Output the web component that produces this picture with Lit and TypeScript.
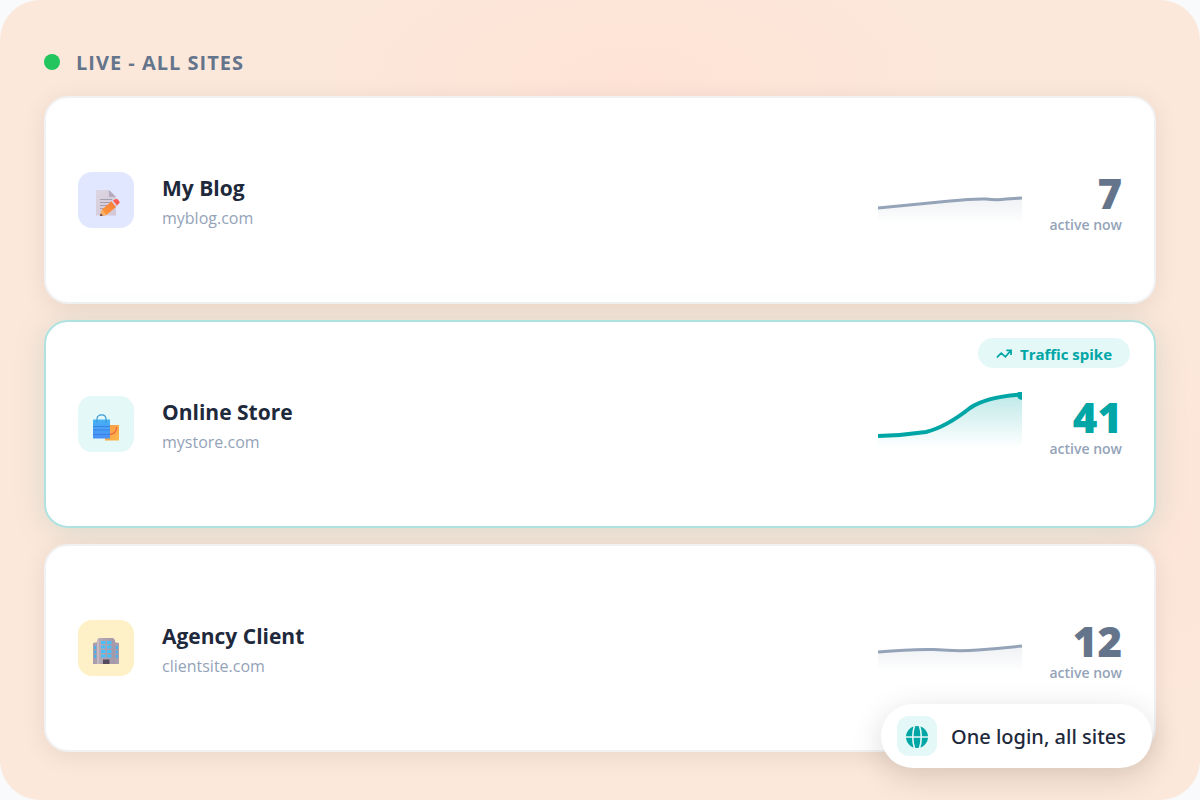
import { LitElement, html, css, svg, nothing } from "lit";
import { customElement, property } from "lit/decorators.js";

const noteIcon = svg`
  <defs>
    <linearGradient id="paper" x1="0" y1="0" x2="1" y2="1"><stop offset="0" stop-color="#dcd6e2"/><stop offset="1" stop-color="#d3c5d6"/></linearGradient>
    <linearGradient id="pencil" x1="1" y1="0" x2="0" y2="1"><stop offset="0" stop-color="#f77a38"/><stop offset="1" stop-color="#ff9c38"/></linearGradient>
  </defs>
  <path d="M4 1h13l7 7v18.500H4z" fill="url(#paper)"/>
  <path d="M17 1l7 7h-5.500q-1.500 0-1.500-1.500z" fill="#b5a9bd"/>
  <path d="M8 10.500h12M8 13.500h12M8 16.500h10M8 19.500h6" stroke="#a3a0b3" stroke-width="1"/>
  <path d="M8 27l2-6.500L20 12l4.500 5.500L14.500 26z" fill="url(#pencil)"/>
  <path d="M8 27l2-6.500 4.500 5.500z" fill="#f5b069"/>
  <path d="M8 27l.8-2.500 2 2z" fill="#50383d"/>
  <path d="M19.500 12.500l1.500-1.200 4.500 5.500-1.500 1.200z" fill="#d9d3e5"/>
  <path d="M21 11.500l3-1.600q1-.5 1.800.5l1.600 2q.7 1-.2 1.900L25 16.500z" fill="#fb5b4c"/>`;

const bagsIcon = svg`
  <defs>
    <linearGradient id="blue" x1="0" y1="0" x2="0" y2="1"><stop offset="0" stop-color="#46b2f5"/><stop offset="1" stop-color="#4b8ff5"/></linearGradient>
    <linearGradient id="amber" x1="0" y1="0" x2="1" y2="1"><stop offset="0" stop-color="#f59a45"/><stop offset="1" stop-color="#ffb84a"/></linearGradient>
  </defs>
  <path d="M13 12h14v15.500H13z" fill="url(#amber)"/>
  <path d="M24.500 14c0 5-2 7-6.500 7.300" fill="none" stroke="#ee6540" stroke-width="1.300"/>
  <path d="M1 6.500h17v19H1z" fill="url(#blue)"/>
  <path d="M1 13.500h17M1 17h17M1 21.500h17" stroke="#3a82e6" stroke-width="1.200"/>
  <path d="M5 10V6c0-5.500 9-5.500 9 0v4" fill="none" stroke="#3a9bd9" stroke-width="1.200"/>`;

const officeIcon = svg`
  <defs>
    <linearGradient id="wall" x1="0" y1="0" x2="1" y2="0"><stop offset="0" stop-color="#b7abb8"/><stop offset="1" stop-color="#a397a8"/></linearGradient>
  </defs>
  <path d="M1 6l5-1v22H1zM22 5l5 1v21h-5z" fill="#a99eae"/>
  <path d="M5 3l2-2h14l2 2v24H5z" fill="url(#wall)"/>
  <path d="M5 3l2-2v26H5z" fill="#c5bac4"/>
  <path d="M2.200 9h2v3h-2zM2.200 13.500h2v3h-2zM2.200 18h2v3h-2zM23.800 9h2v3h-2zM23.800 13.500h2v3h-2zM23.800 18h2v3h-2z" fill="#3db2f0"/>
  <path d="M9 4h4.500v3H9zM15 4h4.500v3H15zM9 8.500h4.500v3H9zM15 8.500h4.500v3H15zM9 13h4.500v3H9zM15 13h4.500v3H15zM9 17.500h4.500v3H9zM15 17.500h4.500v3H15z" fill="#49bff8"/>
  <path d="M11 22.500h6.500V27H11z" fill="#554a5e"/>`;

interface Site {
  name: string;
  domain: string;
  active: number;
  tone: string;
  icon: unknown;
  line: string;
  spike?: boolean;
}

const sites: Site[] = [
  { name: "My Blog", domain: "myblog.com", active: 7, tone: "indigo", icon: noteIcon,
    line: "M0 40L72 33Q96 30.500 108 31Q120 32.500 128 31L144 30" },
  { name: "Online Store", domain: "mystore.com", active: 41, tone: "teal", icon: bagsIcon, spike: true,
    line: "M0 44Q24 43.500 48 40Q68 35 92 16Q108 5 144 2.500" },
  { name: "Agency Client", domain: "clientsite.com", active: 12, tone: "amber", icon: officeIcon,
    line: "M0 36Q32 33 56 33.500Q80 35.500 100 34Q120 32.500 144 30" },
];

@customElement("site-card")
class SiteCard extends LitElement {
  @property({ attribute: false }) site!: Site;

  static styles = css`
    :host { display: flex; flex: 1; }
    .card {
      position: relative;
      box-sizing: border-box;
      flex: 1;
      display: flex;
      align-items: center;
      gap: 28px;
      padding: 16px 32px;
      background: #fff;
      border: 2px solid #f1f1f3;
      border-radius: 24px;
      box-shadow: 0 4px 24px rgba(0, 0, 0, 0.08);
    }
    .card.spike { border-color: #aee3e2; box-shadow: 0 4px 32px rgba(0, 130, 130, 0.15); }
    .tile { flex: none; width: 56px; height: 56px; border-radius: 14px; display: grid; place-items: center; }
    .tile svg { width: 28px; height: 28px; display: block; margin-top: 6px; }
    .indigo { background: #e0e7ff; }
    .teal { background: #e3f8f7; }
    .amber { background: #fef1c7; }
    .about { flex: 1; min-width: 0; padding-top: 8px; }
    .name { margin: 0; font-size: 21px; line-height: 28px; font-weight: 700; color: #1e293b; }
    .domain { font-size: 16px; line-height: 32px; color: #94a3b8; display: block; }
    .spark { flex: none; width: 144px; height: 64px; display: block; color: #94a3b8; }
    .spike .spark { color: #00a5a5; }
    .stat { flex: none; width: 72px; display: flex; flex-direction: column; align-items: flex-end; white-space: nowrap; padding-top: 2px; }
    .count { font-size: 42px; line-height: 48px; font-weight: 800; color: #64748b; }
    .spike .count { color: #00a5a5; }
    .label { font-size: 14px; line-height: 16px; font-weight: 600; color: #94a3b8; }
    .badge {
      position: absolute;
      top: 16px;
      right: 24px;
      display: flex;
      align-items: center;
      gap: 8px;
      box-sizing: border-box;
      height: 30px;
      padding: 2px 18px 0;
      border-radius: 15px;
      background: #e3f8f7;
      color: #00a5a5;
      font-size: 15px;
      line-height: 28px;
      font-weight: 700;
    }
    .badge svg { width: 16px; height: 10px; }
  `;

  render() {
    const s = this.site;
    return html`
      <article class="card ${s.spike ? "spike" : ""}">
        ${s.spike
          ? html`<span class="badge">
              <svg viewBox="0 0 17 10" fill="none" stroke="currentColor" stroke-width="1.800">
                <path d="M1 8.500L5.500 4l4.500 4 5.500-6.500M11 1.200h5V6" />
              </svg>
              Traffic spike</span>`
          : nothing}
        <span class="tile ${s.tone}"><svg viewBox="0 0 28 28" aria-hidden="true">${s.icon}</svg></span>
        <div class="about">
          <h2 class="name">${s.name}</h2>
          <span class="domain">${s.domain}</span>
        </div>
        <svg class="spark" viewBox="0 0 144 64" aria-hidden="true">
          <defs>
            <linearGradient id="fade" x1="0" y1="0" x2="0" y2="1">
              <stop offset="0" stop-color="currentColor" stop-opacity=${s.spike ? 0.25 : 0.15} />
              <stop offset="1" stop-color="currentColor" stop-opacity="0" />
            </linearGradient>
          </defs>
          <path d="${s.line}V56H0Z" fill="url(#fade)" />
          <path d=${s.line} fill="none" stroke="currentColor" stroke-width=${s.spike ? 4 : 3} />
          ${s.spike ? svg`<circle cx="144" cy="3" r="5" fill="currentColor" />` : nothing}
        </svg>
        <div class="stat">
          <span class="count">${s.active}</span>
          <span class="label">active now</span>
        </div>
      </article>
    `;
  }
}

@customElement("app-root")
class AppRoot extends LitElement {
  static styles = css`
    :host {
      display: block;
      min-height: 100vh;
      background: #f8fafc;
      font-family: "Open Sans", "Noto Sans", sans-serif;
    }
    .panel {
      position: relative;
      box-sizing: border-box;
      min-height: 100vh;
      display: flex;
      flex-direction: column;
      gap: 20px;
      padding: 48px 44px;
      border-radius: 40px;
      background:
        radial-gradient(ellipse 30% 20% at 53% 10%, #fee3d6, transparent),
        radial-gradient(ellipse 8% 25% at 98% 66%, #fde5d9, transparent),
        #fce8da;
    }
    .head { display: flex; align-items: center; gap: 16px; height: 28px; }
    .dot { width: 16px; height: 16px; border-radius: 50%; background: #22c55e; }
    .title { margin: 0; padding-top: 2px; font-size: 20px; line-height: 28px; font-weight: 700; letter-spacing: 1px; color: #64748b; }
    .list { flex: 1; display: flex; flex-direction: column; gap: 16px; }
    .pill {
      position: absolute;
      right: 48px;
      bottom: 32px;
      display: flex;
      align-items: center;
      gap: 14px;
      height: 64px;
      box-sizing: border-box;
      padding: 0 26px 0 16px;
      border-radius: 32px;
      background: #fff;
      box-shadow: 0 8px 32px rgba(0, 0, 0, 0.15);
      font-family: "Noto Sans", "Open Sans", sans-serif;
      font-size: 20px;
      font-weight: 500;
      color: #1e293b;
      white-space: nowrap;
    }
    .globe { width: 40px; height: 40px; border-radius: 12px; background: #e3f8f7; display: grid; place-items: center; }
    .globe svg { width: 24px; height: 24px; margin-top: 2px; }
  `;

  render() {
    return html`
      <main class="panel">
        <header class="head">
          <span class="dot"></span>
          <h1 class="title">LIVE - ALL SITES</h1>
        </header>
        <section class="list">${sites.map((s) => html`<site-card .site=${s}></site-card>`)}</section>
        <aside class="pill">
          <span class="globe">
            <svg viewBox="0 0 24 24" aria-hidden="true">
              <circle cx="12" cy="12" r="11" fill="#00a5a5" />
              <path d="M0 12h24M10 -1Q5.500 12 10 25M14 -1Q18.500 12 14 25" fill="none" stroke="#e3f8f7" stroke-width="1.600" />
            </svg>
          </span>
          One login, all sites
        </aside>
      </main>
    `;
  }
}
